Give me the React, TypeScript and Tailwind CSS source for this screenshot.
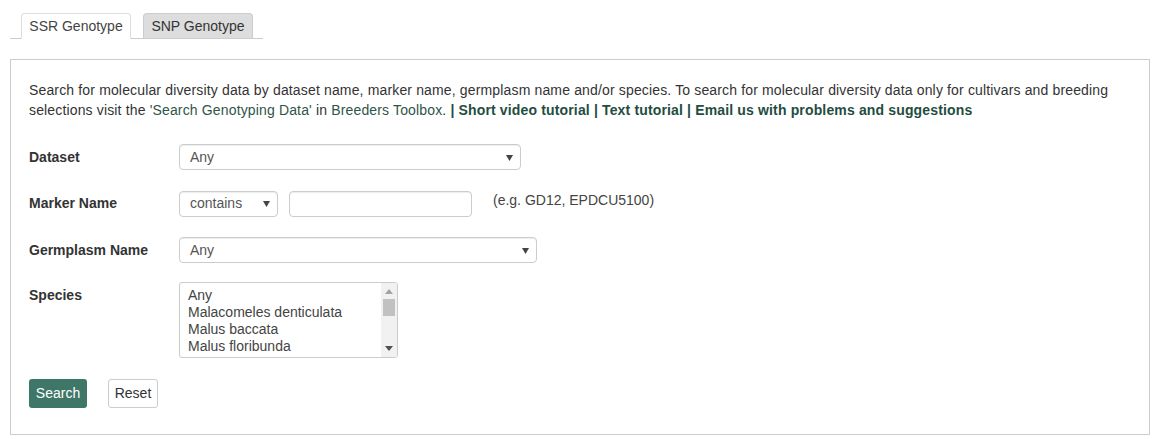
const fieldText = "text-[14px] text-[#555]";

function FakeSelect({ value, width }: { value: string; width: string }) {
  return (
    <div
      className={`${width} ${fieldText} flex h-[26px] items-center justify-between rounded-[4px] border border-[#ccc] bg-white pl-[10px] pr-[7px] shadow-[inset_0_1px_1px_rgba(0,0,0,0.075)]`}
    >
      <span>{value}</span>
      <svg width="7" height="6" viewBox="0 0 7 6" className="mt-[1px]">
        <path d="M0 0 H7 L3.5 6 Z" fill="#444" />
      </svg>
    </div>
  );
}

function SpeciesList() {
  const items = [
    "Any",
    "Malacomeles denticulata",
    "Malus baccata",
    "Malus floribunda",
    "Malus orientalis",
  ];
  return (
    <div className="flex h-[76px] w-[219px] overflow-hidden rounded-[3px] border border-[#ccc] bg-white">
      <div className="flex-1 overflow-hidden pl-[8px] pt-[4px] text-[14px] leading-[17px] text-[#444]">
        {items.map((it) => (
          <div key={it} className="whitespace-nowrap">
            {it}
          </div>
        ))}
      </div>
      <div className="flex w-[16px] flex-col items-center bg-[#f1f1f1]">
        <svg width="8" height="5" viewBox="0 0 8 5" className="mt-[6px]">
          <path d="M0 5 L4 0 L8 5 Z" fill="#a3a3a3" />
        </svg>
        <div className="mt-[5px] h-[17px] w-[12px] bg-[#c1c1c1]" />
        <div className="flex-1" />
        <svg width="8" height="5" viewBox="0 0 8 5" className="mb-[6px]">
          <path d="M0 0 H8 L4 5 Z" fill="#505050" />
        </svg>
      </div>
    </div>
  );
}

function Row({ label, children, top }: { label: string; children: React.ReactNode; top?: boolean }) {
  return (
    <div className={`flex ${top ? "items-start" : "items-center"}`}>
      <div
        className={`w-[150px] shrink-0 text-[14px] font-bold text-[#333] ${top ? "pt-[3px]" : ""}`}
      >
        {label}
      </div>
      {children}
    </div>
  );
}

export default function App() {
  return (
    <div className="min-h-screen bg-white font-['Liberation_Sans',Arial,sans-serif] text-[14px] text-[#333]">
      <div className="px-[10px] pt-[13px]">
        <div className="flex w-[253px] border-b border-[#ccc] pl-[11px]">
          <div className="-mb-px flex h-[26px] w-[110px] items-center justify-center rounded-t-[4px] border border-[#ddd] border-b-white bg-white text-[14px] text-[#444]">
            SSR Genotype
          </div>
          <div className="ml-[12px] flex h-[25px] w-[110px] items-center justify-center rounded-t-[4px] border border-b-0 border-[#ccc] bg-[#ddd] text-[14px] text-[#333]">
            SNP Genotype
          </div>
        </div>

        <div className="mt-[20px] h-[376px] w-[1140px] border border-[#ccc] px-[18px] pt-[20px]">
          <p className="leading-[20px] tracking-[0.15px]">
            Search for molecular diversity data by dataset name, marker name, germplasm name
            and/or species. To search for molecular diversity data only for cultivars and breeding
            selections visit the <span className="text-[#2f5548]">'Search Genotyping Data'</span> in{" "}
            <span className="text-[#2f5548]">Breeders Toolbox</span>.{" "}
            <span className="font-bold text-[#1f4d3f]">
              | Short video tutorial | Text tutorial | Email us with problems and suggestions
            </span>
          </p>

          <div className="mt-[24px] flex flex-col gap-[20px]">
            <Row label="Dataset">
              <FakeSelect value="Any" width="w-[342px]" />
            </Row>
            <Row label="Marker Name">
              <FakeSelect value="contains" width="w-[99px]" />
              <div className="ml-[11px] h-[26px] w-[183px] rounded-[4px] border border-[#ccc] bg-white shadow-[inset_0_1px_1px_rgba(0,0,0,0.075)]" />
              <span className="mb-[6px] ml-[21px] text-[14px] text-[#444]">
                (e.g. GD12, EPDCU5100)
              </span>
            </Row>
            <Row label="Germplasm Name">
              <FakeSelect value="Any" width="w-[358px]" />
            </Row>
            <div className="-mt-px">
              <Row label="Species" top>
                <SpeciesList />
              </Row>
            </div>
          </div>

          <div className="mt-[21px] flex gap-[21px]">
            <button className="h-[29px] w-[58px] rounded-[3px] bg-[#3e7667] text-[14px] text-white">
              Search
            </button>
            <button className="h-[29px] w-[50px] rounded-[3px] border border-[#ccc] bg-white text-[14px] text-[#333]">
              Reset
            </button>
          </div>
        </div>
      </div>
    </div>
  );
}
